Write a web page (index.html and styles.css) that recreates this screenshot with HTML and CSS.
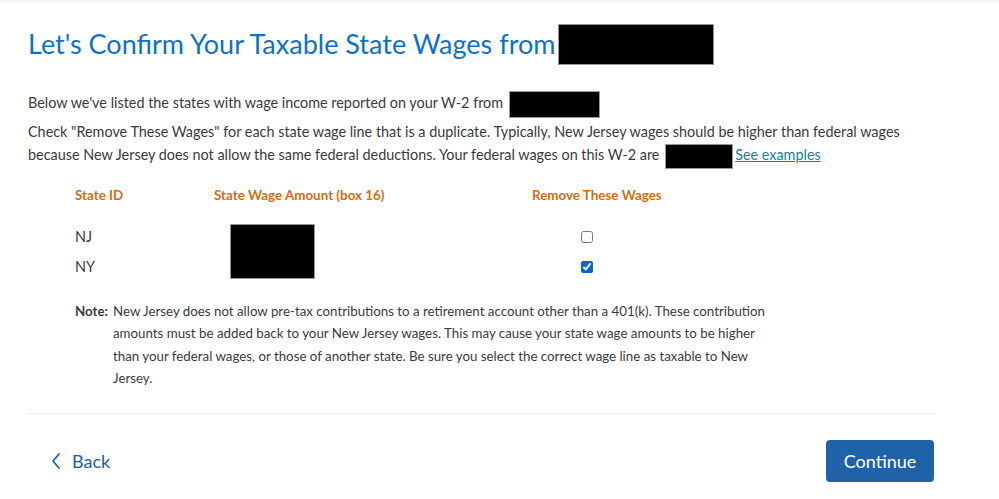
FILE: index.html
```html
<!DOCTYPE html>
<html lang="en">
<head>
    <meta charset="UTF-8">
    <meta name="viewport" content="width=device-width, initial-scale=1.0">
    <title>Confirm Taxable State Wages</title>
    <link rel="stylesheet" href="styles.css">
</head>
<body>
    <div class="topbar"></div>
    <div class="page">
        <h1 class="title">Let's Confirm Your Taxable State Wages from<span class="redact redact-title"></span></h1>

        <p class="intro">Below we've listed the states with wage income reported on your W-2 from <span class="redact redact-employer"></span></p>

        <p class="text">Check "Remove These Wages" for each state wage line that is a duplicate. Typically, New Jersey wages should be higher than federal wages because New Jersey does not allow the same federal deductions. Your federal wages on this W-2 are <span class="redact redact-fed"></span><a href="#" class="link">See examples</a></p>

        <div class="wages">
            <div class="head">State ID</div>
            <div class="head">State Wage Amount (box 16)</div>
            <div class="head">Remove These Wages</div>

            <div class="cell state">NJ</div>
            <div class="cell amount"><span class="redact redact-amount"></span></div>
            <div class="cell check"><input type="checkbox"></div>

            <div class="cell state">NY</div>
            <div class="cell check"><input type="checkbox" checked></div>
        </div>

        <div class="note">
            <strong class="note-label">Note:</strong>
            <p class="note-text">New Jersey does not allow pre-tax contributions to a retirement account other than a 401(k). These contribution amounts must be added back to your New Jersey wages. This may cause your state wage amounts to be higher than your federal wages, or those of another state. Be sure you select the correct wage line as taxable to New Jersey.</p>
        </div>

        <div class="footer">
            <a href="#" class="back">
                <svg width="12" height="18" viewBox="0 0 12 18"><path d="M9 2 L3 9 L9 16" fill="none" stroke="#1d5ea8" stroke-width="1.8" stroke-linecap="round" stroke-linejoin="round"/></svg>
                Back
            </a>
            <button type="button" class="continue">Continue</button>
        </div>
    </div>
</body>
</html>
```

FILE: styles.css
```css
body {
    margin: 0;
    font-family: Lato, "Noto Sans", sans-serif;
    color: #393a3d;
    background: #fff;
}
.topbar {
    height: 3px;
    background: #f6f6f6;
}
.page {
    width: 906px;
    padding-left: 28px;
}
.title {
    display: flex;
    align-items: center;
    margin: 21px 0 0;
    font-size: 27px;
    font-weight: 400;
    color: #0b72c6;
    height: 40px;
    line-height: 36px;
}
.redact {
    display: inline-block;
    background: #000;
    border: 1px solid #999;
    box-sizing: border-box;
    vertical-align: middle;
}
.redact-title {
    width: 156px;
    height: 41px;
    margin-left: 3px;
}
.redact-employer {
    width: 91px;
    height: 27px;
    margin-left: 2px;
}
.redact-fed {
    width: 68px;
    height: 25px;
    margin-left: 2px;
    margin-right: 2px;
}
.redact-amount {
    width: 85px;
    height: 55px;
}
.intro {
    margin: 25px 0 0;
    font-size: 14.4px;
    line-height: 27px;
}
.text {
    margin: 2px 0 0;
    width: 890px;
    font-size: 14.4px;
    line-height: 23px;
}
.link {
    color: #138392;
    text-decoration: underline;
}
.wages {
    display: grid;
    grid-template-columns: 139px 318px 200px;
    margin: 16px 0 0 47px;
}
.head {
    font-size: 13.4px;
    font-weight: 700;
    color: #d26c10;
    line-height: 20px;
    margin-bottom: 17px;
}
.cell {
    height: 30px;
    display: flex;
    align-items: center;
    font-size: 14.4px;
}
.amount {
    grid-row: span 2;
    height: 60px;
    padding-left: 16px;
}
.check {
    padding-left: 49px;
}
.check input {
    margin: 0;
    width: 12px;
    height: 12px;
    accent-color: #0b63ce;
}
.note {
    display: flex;
    margin: 18px 0 0 47px;
    font-size: 13.3px;
    line-height: 22.5px;
}
.note-label {
    flex: none;
    width: 38px;
    color: #393a3d;
}
.note-text {
    margin: 0;
    width: 655px;
}
.footer {
    display: flex;
    justify-content: space-between;
    align-items: center;
    margin-top: 23px;
    padding-top: 26px;
    border-top: 1px solid #ececec;
}
.back {
    display: flex;
    align-items: center;
    gap: 10px;
    margin-left: 22px;
    font-size: 18px;
    color: #1d5ea8;
    text-decoration: none;
}
.continue {
    width: 108px;
    height: 42px;
    background: #2062a8;
    border: none;
    border-radius: 4px;
    color: #fff;
    font-family: Lato, "Noto Sans", sans-serif;
    font-size: 18px;
    cursor: pointer;
}
```
